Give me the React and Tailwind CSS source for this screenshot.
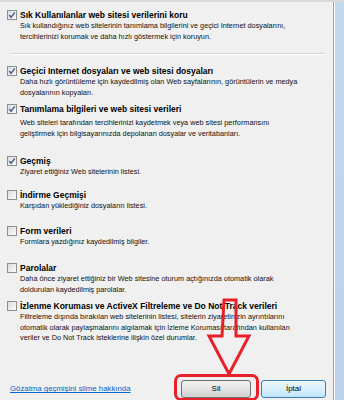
const items = [
  {
    title: 'Sık Kullanılanlar web sitesi verilerini koru',
    lines: [
      'Sık kullandığınız web sitelerinin tanımlama bilgilerini ve geçici Internet dosyalarını,',
      'tercihlerinizi korumak ve daha hızlı göstermek için koruyun.',
    ],
    checked: true,
    mt: 'mt-0',
  },
  {
    title: 'Geçici Internet dosyaları ve web sitesi dosyaları',
    lines: [
      'Daha hızlı görüntüleme için kaydedilmiş olan Web sayfalarının, görüntülerin ve medya',
      'dosyalarının kopyaları.',
    ],
    checked: true,
    mt: 'mt-[10px]',
  },
  {
    title: 'Tanımlama bilgileri ve web sitesi verileri',
    lines: [
      'Web siteleri tarafından tercihlerinizi kaydetmek veya web sitesi performansını',
      'geliştirmek için bilgisayarınızda depolanan dosyalar ve veritabanları.',
    ],
    checked: true,
    mt: 'mt-[5px]',
    descMt: 'mt-[3px]',
  },
  {
    title: 'Geçmiş',
    lines: ['Ziyaret ettiğiniz Web sitelerinin listesi.'],
    checked: true,
    mt: 'mt-[16px]',
  },
  {
    title: 'İndirme Geçmişi',
    lines: ['Karşıdan yüklediğiniz dosyaların listesi.'],
    mt: 'mt-[11.5px]',
  },
  {
    title: 'Form verileri',
    lines: ['Formlara yazdığınız kaydedilmiş bilgiler.'],
    mt: 'mt-[13.5px]',
  },
  {
    title: 'Parolalar',
    lines: [
      'Daha önce ziyaret ettiğiniz bir Web sitesine oturum açtığınızda otomatik olarak',
      'doldurulan kaydedilmiş parolalar.',
    ],
    mt: 'mt-[14.5px]',
  },
  {
    title: 'İzlenme Koruması ve ActiveX Filtreleme ve Do Not Track verileri',
    lines: [
      'Filtreleme dışında bırakılan web sitelerinin listesi, sitelerin ziyaretinizin ayrıntılarını',
      'otomatik olarak paylaşmalarını algılamak için İzleme Koruması tarafından kullanılan',
      'veriler ve Do Not Track isteklerine ilişkin özel durumlar.',
    ],
    mt: 'mt-[5px]',
  },
];

function Checkbox({ checked }) {
  return (
    <span className="relative w-[10px] h-[10px] shrink-0 border border-[#8f8f8f] bg-gradient-to-br from-[#dcdcdc] to-[#fbfbfb]">
      {checked && (
        <svg viewBox="0 0 10 10" className="absolute -left-px -top-px w-[10px] h-[10px]">
          <path d="M2.2 5 L4.1 7.2 L7.8 2.4" fill="none" stroke="#4a5f97" strokeWidth="1.5" />
        </svg>
      )}
    </span>
  );
}

function Option({ title, lines, checked, mt, descMt }) {
  return (
    <div className={mt}>
      <div className="flex items-center gap-[3px] h-[12px]">
        <Checkbox checked={checked} />
        <span className="font-bold text-[8.5px] text-black whitespace-nowrap">{title}</span>
      </div>
      <div className={`pl-[13px] text-[7.3px] leading-[10.5px] text-[#111] ${descMt || ''}`}>
        {lines.map(l => (
          <div key={l} className="whitespace-nowrap">{l}</div>
        ))}
      </div>
    </div>
  );
}

export default function App() {
  return (
    <div
      className="relative w-[344px] h-[400px] overflow-hidden flex bg-[#f0f0f0] border-t-2 border-[#d9d9d9]"
      style={{ fontFamily: '"Liberation Sans", Arial, sans-serif' }}
    >
      <div className="flex-1 flex flex-col pl-[7px] pt-[7px]">
        {items.slice(0, 1).map(it => <Option key={it.title} {...it} />)}
        <div className="mt-[11px] ml-[3px] mr-[8px] border-t border-[#d5d5d5] border-b border-b-white" />
        {items.slice(1).map(it => <Option key={it.title} {...it} />)}

        <div className="mt-[36.5px] flex items-center h-[18px] pr-[7px]">
          <a className="ml-[3px] text-[7.8px] text-[#0066cc] underline whitespace-nowrap">
            Gözatma geçmişini silme hakkında
          </a>
          <button className="ml-auto w-[70px] h-[18px] rounded-[3px] border border-[#707070] bg-gradient-to-b from-[#f2f2f2] via-[#e4e4e4] to-[#cfcfcf] text-[8px] text-black">
            Sil
          </button>
          <button className="ml-[10px] w-[65px] h-[18px] rounded-[3px] border border-[#3c7fb1] bg-gradient-to-b from-[#eaf6fd] via-[#d9f0fc] to-[#bee6fd] text-[8px] text-black">
            İptal
          </button>
        </div>
      </div>

      <div className="w-[11px] shrink-0 border-l border-[#a0a0a0] bg-white pl-px">
        <div className="w-full h-full bg-gradient-to-b from-[#c4d8ee] to-[#bcd2ea]" />
      </div>

      <div className="absolute left-[174px] top-[372px] w-[85px] h-[27px] border-[3px] border-[#e8202a] rounded-[7px]" />
      <svg className="absolute left-0 top-0 pointer-events-none" width="344" height="400">
        <path
          d="M224 298 L236 298 L236 334 L249 334 L229 372 L209 334 L222 334 Z"
          fill="none"
          stroke="#e8202a"
          strokeWidth="3"
          strokeLinejoin="miter"
        />
      </svg>
    </div>
  );
}
